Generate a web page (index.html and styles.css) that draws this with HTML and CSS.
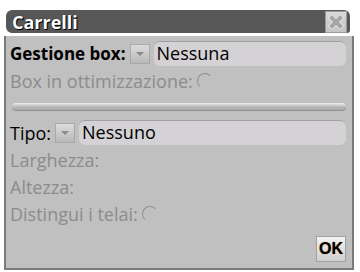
FILE: index.html
```html
<!DOCTYPE html>
<html lang="it">
<head>
    <meta charset="UTF-8">
    <title>Carrelli</title>
    <link rel="stylesheet" href="styles.css">
</head>
<body>
    <div class="dialog">
        <div class="titlebar">
            <span class="title">Carrelli</span>
            <button class="close">
                <svg width="18" height="18" viewBox="0 0 18 18"><path d="M3 3 L15 15 M15 3 L3 15" stroke="#e6e6e6" stroke-width="6"/><path d="M3.5 3.5 L14.5 14.5 M14.5 3.5 L3.5 14.5" stroke="#a6a6a6" stroke-width="4"/></svg>
            </button>
        </div>
        <div class="panel">
            <div class="row">
                <span class="label strong">Gestione box:</span>
                <span class="drop"><span class="arrow"></span></span>
                <span class="field">Nessuna</span>
            </div>
            <div class="row">
                <span class="label dim">Box in ottimizzazione:</span>
                <span class="radio"></span>
            </div>
            <div class="separator"></div>
            <div class="row">
                <span class="label">Tipo:</span>
                <span class="drop"><span class="arrow"></span></span>
                <span class="field">Nessuno</span>
            </div>
            <div class="row"><span class="label dim">Larghezza:</span></div>
            <div class="row"><span class="label dim">Altezza:</span></div>
            <div class="row">
                <span class="label dim">Distingui i telai:</span>
                <span class="radio"></span>
            </div>
            <div class="footer">
                <button class="ok">OK</button>
            </div>
        </div>
    </div>
</body>
</html>
```
FILE: styles.css
```css
body {
    margin: 0;
    background: #ffffff;
    font-family: 'Open Sans', 'Noto Sans', sans-serif;
}
.dialog {
    width: 350px;
    margin: 10px 0 0 4px;
}
.titlebar {
    height: 23px;
    margin: 0 4px 0 2px;
    background: #575757;
    border-radius: 6px 6px 3px 6px;
    display: flex;
    align-items: center;
    justify-content: space-between;
    padding: 0 3px 0 6px;
}
.title {
    color: #ffffff;
    font-weight: bold;
    font-size: 18px;
    text-shadow: 0 0 1px #000, 1px 1px 0 #000;
}
.close {
    width: 22px;
    height: 22px;
    padding: 0;
    border: 1px solid #9a9a9a;
    background: linear-gradient(#d8d8d8, #c4c4c4);
    display: flex;
    align-items: center;
    justify-content: center;
}
.panel {
    margin-top: 3px;
    height: 228px;
    background: #c0c0c0;
    border-left: 2px solid #7a7a7a;
    border-right: 2px solid #7a7a7a;
    border-bottom: 2px solid #7a7a7a;
    padding: 4px 6px 0 4px;
    display: flex;
    flex-direction: column;
}
.row {
    display: flex;
    align-items: center;
    height: 27px;
    gap: 4px;
}
.label {
    font-size: 18px;
    color: #000000;
    white-space: nowrap;
}
.strong {
    font-weight: bold;
    font-size: 17px;
}
.dim {
    color: #8c8c8c;
}
.drop {
    width: 18px;
    height: 18px;
    background: linear-gradient(#dcdcdc, #b8b8b8);
    border: 1px solid #a9a9a9;
    display: flex;
    align-items: center;
    justify-content: center;
}
.arrow {
    width: 0;
    height: 0;
    border-left: 4px solid transparent;
    border-right: 4px solid transparent;
    border-top: 4px solid #8a8a8a;
}
.field {
    flex: 1;
    height: 24px;
    background: #d4d2d4;
    border-top: 1px solid #a0a0a0;
    border-radius: 6px;
    font-size: 18px;
    line-height: 23px;
    padding-left: 3px;
    color: #000000;
}
.radio {
    width: 14px;
    height: 14px;
    border-radius: 50%;
    border: 1px solid transparent;
    border-top-color: #909090;
    border-left-color: #909090;
}
.separator {
    height: 7px;
    margin: 9px 0 8px 2px;
    border-radius: 4px;
    background: linear-gradient(#f0f0f0, #bcbcbc 50%, #a8a8a8);
    border-bottom: 1px solid #909090;
}
.footer {
    margin-top: auto;
    display: flex;
    justify-content: flex-end;
    padding-bottom: 6px;
}
.ok {
    width: 30px;
    height: 26px;
    padding: 0;
    border: 1px solid #a0a0a0;
    background: linear-gradient(#f4f4f4, #cfcfcf);
    font-family: 'Liberation Sans', sans-serif;
    font-weight: bold;
    font-size: 16px;
    color: #000;
    text-shadow: 0 0 1px #a06020;
}
```
